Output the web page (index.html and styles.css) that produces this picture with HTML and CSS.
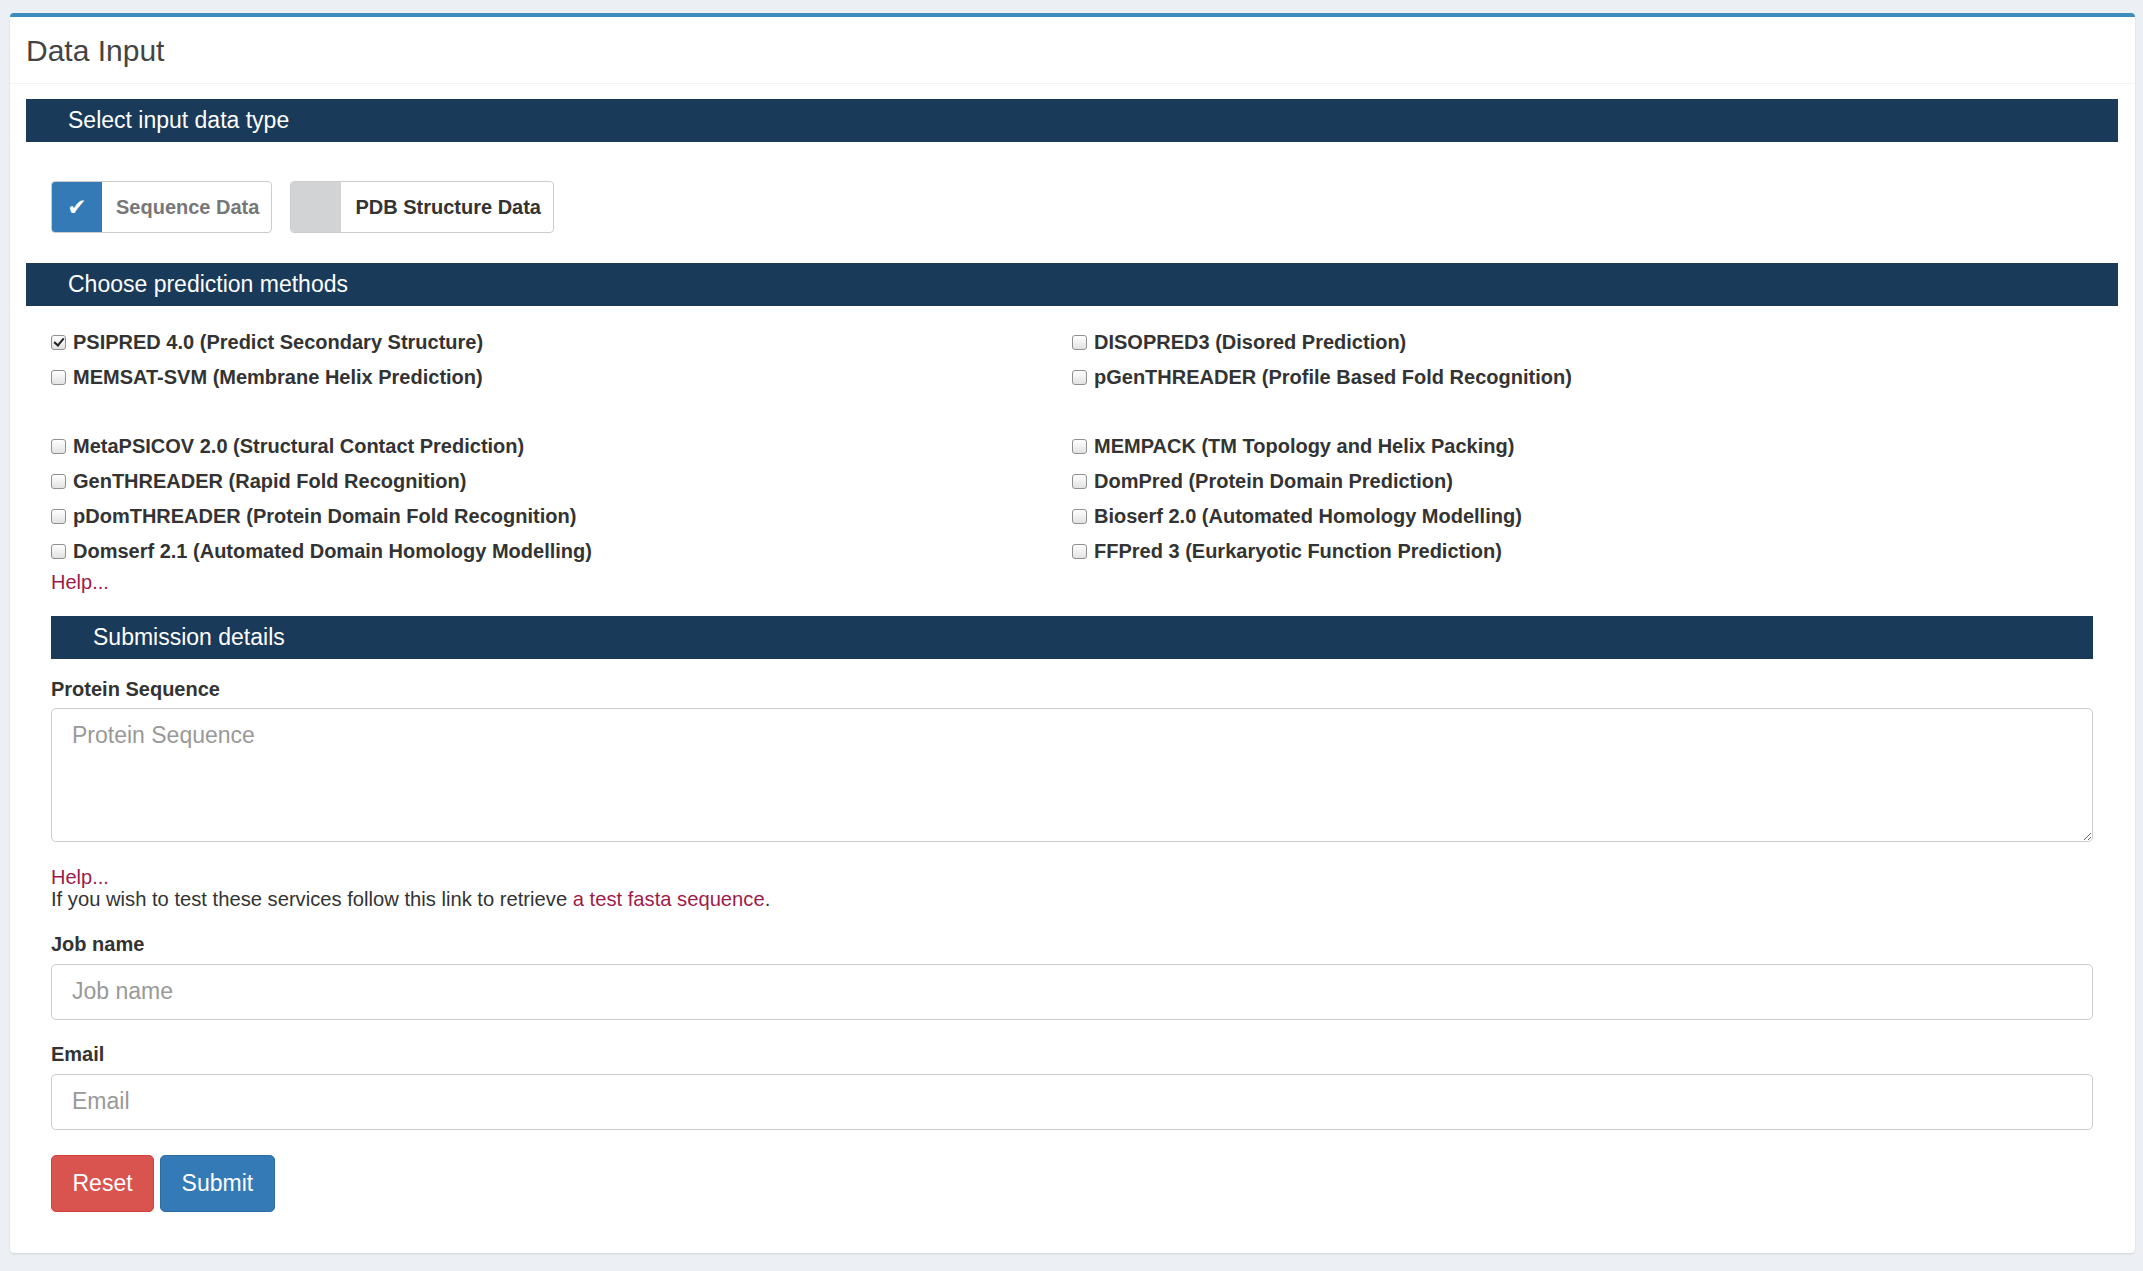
FILE: index.html
```html
<!DOCTYPE html>
<html lang="en">
<head>
    <meta charset="UTF-8">
    <title>Data Input</title>
    <link rel="stylesheet" href="styles.css">
</head>
<body>
    <div class="box">
        <div class="box-header">
            <h3>Data Input</h3>
        </div>
        <div class="box-body">
            <div class="bar">Select input data type</div>
            <div class="inset">
                <div class="toggles">
                    <label class="toggle">
                        <span class="toggle-icon on">&#10004;</span>
                        <span class="toggle-text muted">Sequence Data</span>
                    </label>
                    <label class="toggle">
                        <span class="toggle-icon"></span>
                        <span class="toggle-text">PDB Structure Data</span>
                    </label>
                </div>
            </div>

            <div class="bar">Choose prediction methods</div>
            <div class="inset">
                <div class="methods">
                    <div class="method-col">
                        <div class="method-group">
                            <label class="method"><span class="cb checked"></span>PSIPRED 4.0 (Predict Secondary Structure)</label>
                            <label class="method"><span class="cb"></span>MEMSAT-SVM (Membrane Helix Prediction)</label>
                        </div>
                        <div class="method-group">
                            <label class="method"><span class="cb"></span>MetaPSICOV 2.0 (Structural Contact Prediction)</label>
                            <label class="method"><span class="cb"></span>GenTHREADER (Rapid Fold Recognition)</label>
                            <label class="method"><span class="cb"></span>pDomTHREADER (Protein Domain Fold Recognition)</label>
                            <label class="method"><span class="cb"></span>Domserf 2.1 (Automated Domain Homology Modelling)</label>
                        </div>
                    </div>
                    <div class="method-col">
                        <div class="method-group">
                            <label class="method"><span class="cb"></span>DISOPRED3 (Disored Prediction)</label>
                            <label class="method"><span class="cb"></span>pGenTHREADER (Profile Based Fold Recognition)</label>
                        </div>
                        <div class="method-group">
                            <label class="method"><span class="cb"></span>MEMPACK (TM Topology and Helix Packing)</label>
                            <label class="method"><span class="cb"></span>DomPred (Protein Domain Prediction)</label>
                            <label class="method"><span class="cb"></span>Bioserf 2.0 (Automated Homology Modelling)</label>
                            <label class="method"><span class="cb"></span>FFPred 3 (Eurkaryotic Function Prediction)</label>
                        </div>
                    </div>
                </div>
                <a href="#" class="help">Help...</a>

                <div class="bar sub-bar">Submission details</div>

                <label class="field-label first" for="seq">Protein Sequence</label>
                <textarea id="seq" class="field seq" placeholder="Protein Sequence"></textarea>
                <p class="note">
                    <a href="#" class="help">Help...</a><br>
                    If you wish to test these services follow this link to retrieve <a href="#">a test fasta sequence</a>.
                </p>

                <label class="field-label" for="job">Job name</label>
                <input id="job" class="field" type="text" placeholder="Job name">

                <label class="field-label" for="email">Email</label>
                <input id="email" class="field" type="text" placeholder="Email">

                <div class="actions">
                    <button class="btn btn-reset">Reset</button>
                    <button class="btn btn-submit">Submit</button>
                </div>
            </div>
        </div>
    </div>
</body>
</html>
```

FILE: styles.css
```css
body {
    font-family: "Liberation Sans", Arial, sans-serif;
    background: #ecf0f5;
    margin: 0;
    padding: 13px 8px 18px 10px;
    color: #333;
}
.box {
    background: white;
    border-top: 4px solid #3c8dbc;
    border-radius: 4px;
    box-shadow: 0 1px 2px rgba(0,0,0,0.12);
}
.box-header {
    height: 66px;
    display: flex;
    align-items: center;
    padding-left: 16px;
    border-bottom: 1px solid #f2f2f2;
}
.box-header h3 {
    margin: 2px 0 0;
    font-size: 30px;
    font-weight: normal;
    color: #444;
}
.box-body {
    padding: 15px 17px 41px 16px;
}
.bar {
    background: #193a59;
    color: white;
    height: 43px;
    display: flex;
    align-items: center;
    padding-left: 42px;
    font-size: 23px;
}
.inset {
    padding: 0 25px;
}
.toggles {
    display: flex;
    gap: 18px;
    margin: 39px 0 30px;
}
.toggle {
    display: flex;
    height: 50px;
    border: 1px solid #ccc;
    border-radius: 4px;
    overflow: hidden;
    font-size: 20px;
    font-weight: bold;
}
.toggle-icon {
    width: 50px;
    background: #d2d3d5;
    color: white;
    font-family: "DejaVu Sans", sans-serif;
    font-size: 23px;
    display: flex;
    align-items: center;
    justify-content: center;
}
.toggle-icon.on {
    background: #337ab7;
}
.toggle-text {
    display: flex;
    align-items: center;
    padding: 0 12px 0 14px;
}
.toggle-text.muted {
    color: #777;
}
.methods {
    display: grid;
    grid-template-columns: 1fr 1fr;
    margin-top: 19px;
}
.method-group + .method-group {
    margin-top: 34.8px;
}
.method {
    display: flex;
    align-items: center;
    height: 34.8px;
    font-size: 20px;
    font-weight: bold;
}
.cb {
    position: relative;
    width: 13px;
    height: 13px;
    margin-right: 7px;
    border: 1px solid #8f8f8f;
    border-radius: 3px;
    background: linear-gradient(#ffffff, #e2e2e2);
    flex-shrink: 0;
}
.cb.checked::after {
    content: "";
    position: absolute;
    left: 4px;
    top: 0;
    width: 4px;
    height: 8px;
    border: solid #222;
    border-width: 0 2.5px 2.5px 0;
    transform: rotate(40deg);
}
a {
    color: #9e1b48;
    text-decoration: none;
}
.help {
    display: inline-block;
    font-size: 20px;
    line-height: 26px;
}
.sub-bar {
    margin-top: 21px;
}
.field-label {
    display: block;
    font-size: 20px;
    font-weight: bold;
    line-height: 28px;
    margin: 20px 0 6px;
}
.field-label.first {
    margin: 16px 0 5px;
}
.field {
    display: block;
    box-sizing: border-box;
    width: 100%;
    height: 56px;
    border: 1px solid #ccc;
    border-radius: 5px;
    padding: 0 20px;
    font-family: "Liberation Sans", Arial, sans-serif;
    font-size: 23px;
    color: #555;
    margin: 0;
}
.field::placeholder {
    color: #999;
}
.field.seq {
    height: 134px;
    padding-top: 13px;
    resize: vertical;
}
.note {
    margin: 24px 0 0;
    font-size: 20.2px;
    line-height: 22px;
}
.note .help {
    font-size: 20px;
    line-height: 22px;
}
.actions {
    display: flex;
    gap: 6px;
    margin-top: 25px;
}
.btn {
    height: 57px;
    padding: 0 20.5px;
    border-radius: 5px;
    color: white;
    font-family: "Liberation Sans", Arial, sans-serif;
    font-size: 23px;
}
.btn-reset {
    background: #d9534f;
    border: 1px solid #d43f3a;
}
.btn-submit {
    background: #337ab7;
    border: 1px solid #2e6da4;
}
```
